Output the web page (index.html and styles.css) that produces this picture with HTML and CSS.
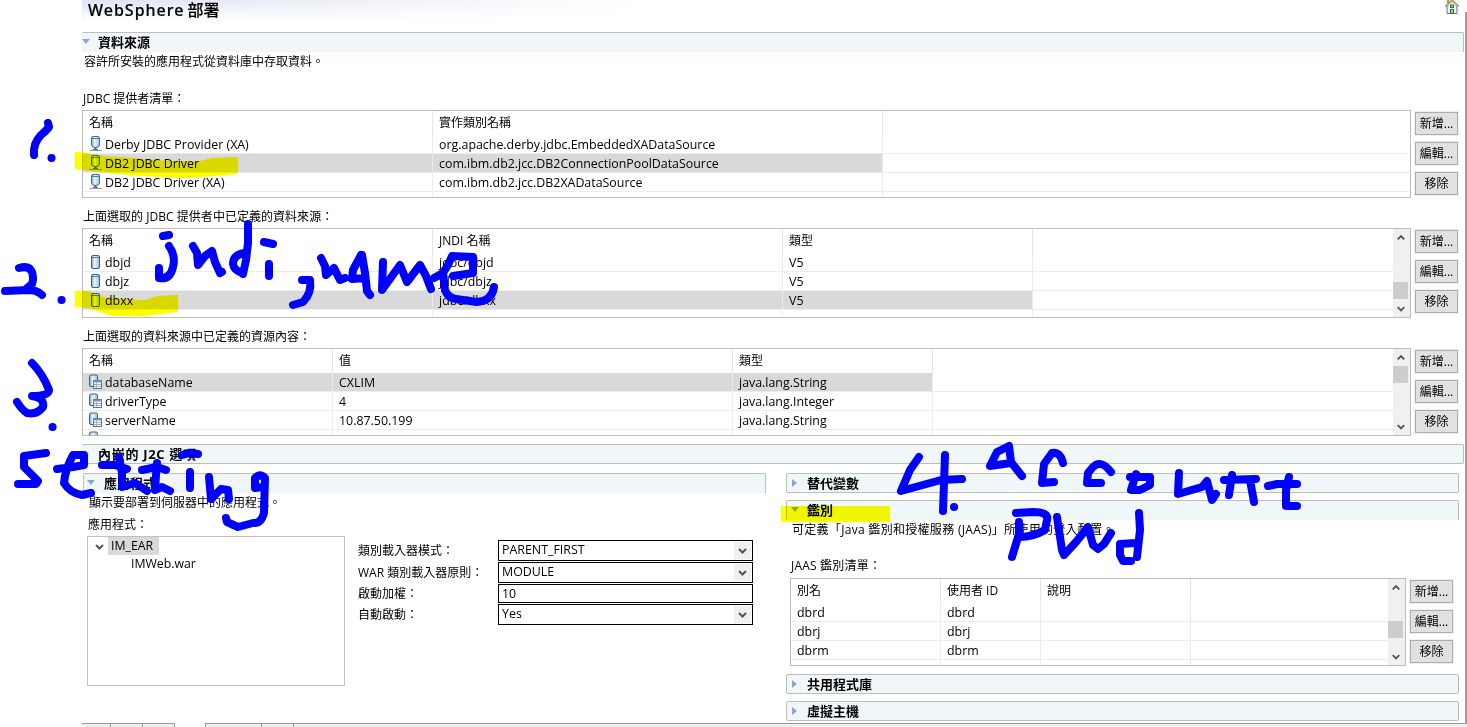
FILE: index.html
```
<!DOCTYPE html>
<html lang="zh-TW">
<head>
<meta charset="utf-8">
<title>WebSphere 部署</title>
<link rel="stylesheet" href="styles.css">
</head>
<body>
<svg class="defs" width="0" height="0" aria-hidden="true">
  <defs>
    <linearGradient id="cyl" x1="0" x2="1" y1="0" y2="0"><stop offset="0" stop-color="#7ba6c8"/><stop offset=".4" stop-color="#edf6fc"/><stop offset="1" stop-color="#9dbdd6"/></linearGradient>
    <symbol id="db" viewBox="0 0 16 16"><path d="M2.500 3Q2.500 1.500 4 1.500H9Q10.500 1.500 10.500 3V13Q10.500 14.500 9 14.500H4Q2.500 14.500 2.500 13Z" fill="url(#cyl)" stroke="#35608c"/><path d="M3 3.500H10" fill="none" stroke="#5c7f9d"/></symbol>
    <symbol id="provider" viewBox="0 0 16 16"><path d="M2.500 2Q2.500 .5 4 .5H9Q10.500 .5 10.500 2V9Q10.500 11.500 6.500 11.500T2.500 9Z" fill="url(#cyl)" stroke="#44719c"/><path d="M3 2.500H10" fill="none" stroke="#5c7f9d"/><path d="M6.500 11V14" stroke="#44607c" stroke-width="2"/><path d="M.5 14.500H13" stroke="#8b9aa8"/><path d="M4 13.500H9" stroke="#54718b"/></symbol>
    <symbol id="prop" viewBox="0 0 16 16"><path d="M.5 2.500Q.5 1 2 1H7Q8.500 1 8.500 2.500V12.500H2Q.5 12.500 .5 11Z" fill="url(#cyl)" stroke="#35608c"/><rect x="4.500" y="6.500" width="8" height="8" fill="#fff" stroke="#56779b"/><path d="M4 7.500H13" stroke="#7895b5" stroke-width="2"/><path d="M5 10.500H12M5 12.500H12M7.500 8V14" stroke="#a3b1c6"/></symbol>
    <symbol id="up" viewBox="0 0 17 17"><path d="M5 10.500L8.500 7L12 10.500" fill="none" stroke="#555" stroke-width="2"/></symbol>
    <symbol id="down" viewBox="0 0 17 17"><path d="M5 7L8.500 10.500L12 7" fill="none" stroke="#555" stroke-width="2"/></symbol>
  </defs>
</svg>
<div class="page">
  <main class="editor">
    <header class="title"><h1><span class="latin">WebSphere</span> 部署</h1>
      <svg class="home" width="14" height="16" viewBox="0 0 14 16"><path d="M2 7V14.500H12V7L7 2Z" fill="#e7f1fc" stroke="#5377aa"/><path d="M.5 7.500L7 1.500L13.500 7.500" fill="none" stroke="#a28a55" stroke-width="2.200"/><path d="M.8 7.500L7 1.800L13.200 7.500" fill="none" stroke="#f2dfac" stroke-width=".8"/><path d="M3 .5V4" stroke="#8c7042" stroke-width="1.500"/><rect x="5.500" y="6" width="3" height="2.500" fill="#9bc43c" stroke="#387858"/><rect x="5.500" y="10.500" width="3" height="4" fill="#d4c72c" stroke="#376a53"/></svg>
    </header>

    <div class="bar bar-top open"><i class="tw down"></i><b>資料來源</b></div>
    <p class="desc">容許所安裝的應用程式從資料庫中存取資料。</p>

    <p class="label l1">JDBC 提供者清單：</p>
    <div class="group">
      <div class="table t1 h88">
        <div class="row head"><span>名稱</span><span>實作類別名稱</span></div>
        <div class="row"><span><svg class="ic"><use href="#provider"/></svg>Derby JDBC Provider (XA)</span><span>org.apache.derby.jdbc.EmbeddedXADataSource</span></div>
        <div class="row sel"><span><svg class="ic"><use href="#provider"/></svg>DB2 JDBC Driver</span><span>com.ibm.db2.jcc.DB2ConnectionPoolDataSource</span></div>
        <div class="row"><span><svg class="ic"><use href="#provider"/></svg>DB2 JDBC Driver (XA)</span><span>com.ibm.db2.jcc.DB2XADataSource</span></div>
        <div class="row"><span></span><span></span></div>
      </div>
      <div class="buttons"><button>新增...</button><button>編輯...</button><button>移除</button></div>
    </div>

    <p class="label l2">上面選取的 JDBC 提供者中已定義的資料來源：</p>
    <div class="group">
      <div class="table t2 h90 scroll">
        <div class="rows">
          <div class="row head"><span>名稱</span><span>JNDI 名稱</span><span>類型</span></div>
          <div class="row"><span><svg class="ic"><use href="#db"/></svg>dbjd</span><span>jdbc/dbjd</span><span>V5</span></div>
          <div class="row"><span><svg class="ic"><use href="#db"/></svg>dbjz</span><span>jdbc/dbjz</span><span>V5</span></div>
          <div class="row sel"><span><svg class="ic"><use href="#db"/></svg>dbxx</span><span>jdbc/dbxx</span><span>V5</span></div>
          <div class="row"><span></span><span></span><span></span></div>
        </div>
        <div class="sb low"><svg><use href="#up"/></svg><i></i><svg><use href="#down"/></svg></div>
      </div>
      <div class="buttons"><button>新增...</button><button>編輯...</button><button>移除</button></div>
    </div>

    <p class="label l3">上面選取的資料來源中已定義的資源內容：</p>
    <div class="group">
      <div class="table t3 h88 scroll">
        <div class="rows">
          <div class="row head"><span>名稱</span><span>值</span><span>類型</span></div>
          <div class="row sel"><span><svg class="ic"><use href="#prop"/></svg>databaseName</span><span>CXLIM</span><span>java.lang.String</span></div>
          <div class="row"><span><svg class="ic"><use href="#prop"/></svg>driverType</span><span>4</span><span>java.lang.Integer</span></div>
          <div class="row"><span><svg class="ic"><use href="#prop"/></svg>serverName</span><span>10.87.50.199</span><span>java.lang.String</span></div>
          <div class="row"><span><svg class="ic"><use href="#prop"/></svg></span><span></span><span></span></div>
        </div>
        <div class="sb top"><svg><use href="#up"/></svg><i></i><svg><use href="#down"/></svg></div>
      </div>
      <div class="buttons"><button>新增...</button><button>編輯...</button><button>移除</button></div>
    </div>

    <div class="bar j2c"><i class="tw"></i><b>內嵌的 J2C 選項</b></div>

    <div class="columns">
      <section class="left">
        <div class="bar open"><i class="tw down"></i><b>應用程式</b></div>
        <p class="adesc">顯示要部署到伺服器中的應用程式。</p>
        <p class="alabel">應用程式：</p>
        <div class="app">
          <div class="tree">
            <div class="node"><svg width="17" height="17"><use href="#down"/></svg><span class="picked">IM_EAR</span></div>
            <div class="node child"><span>IMWeb.war</span></div>
          </div>
          <div class="form">
            <label>類別載入器模式：</label><div class="field"><span>PARENT_FIRST</span><svg><use href="#down"/></svg></div>
            <label>WAR 類別載入器原則：</label><div class="field"><span>MODULE</span><svg><use href="#down"/></svg></div>
            <label>啟動加權：</label><div class="field"><span>10</span></div>
            <label>自動啟動：</label><div class="field"><span>Yes</span><svg><use href="#down"/></svg></div>
          </div>
        </div>
      </section>
      <section class="right">
        <div class="bar"><i class="tw"></i><b>替代變數</b></div>
        <div class="bar open"><i class="tw down"></i><b>鑑別</b></div>
        <div class="auth">
          <p class="jdesc">可定義「Java 鑑別和授權服務 (JAAS)」所使用的登入配置。</p>
          <p class="jlabel">JAAS 鑑別清單：</p>
          <div class="group">
            <div class="table t4 h88 scroll">
              <div class="rows">
                <div class="row head"><span>別名</span><span>使用者 ID</span><span>說明</span></div>
                <div class="row"><span>dbrd</span><span>dbrd</span><span></span></div>
                <div class="row"><span>dbrj</span><span>dbrj</span><span></span></div>
                <div class="row"><span>dbrm</span><span>dbrm</span><span></span></div>
                <div class="row"><span></span><span></span><span></span></div>
              </div>
              <div class="sb mid"><svg><use href="#up"/></svg><i></i><svg><use href="#down"/></svg></div>
            </div>
            <div class="buttons"><button>新增...</button><button>編輯...</button><button>移除</button></div>
          </div>
        </div>
        <div class="bar"><i class="tw"></i><b>共用程式庫</b></div>
        <div class="bar"><i class="tw"></i><b>虛擬主機</b></div>
      </section>
    </div>
  </main>
  <div class="edge"></div>
  <footer class="tabs"><i class="w28"></i><i class="w32"></i><i class="w32"></i><i class="gap"></i><i class="w56"></i><i class="w32"></i><i class="rest"></i></footer>

  <svg class="marker" width="1467" height="727" viewBox="0 0 1467 727">
    <path d="M75 152L87 153L103 156L133 158L167 161H200L212 158L238 157V173L230 175L187 178L157 177L127 175L100 172L75 169Z"/>
    <path d="M75 291H88L103 297L120 299L145 300L158 296L178 295V312L143 316H112L97 311L88 308L75 307Z"/>
    <path d="M781 506H890V522H781Z"/>
  </svg>
  <svg class="ink" width="1467" height="727" viewBox="0 0 1467 727">
    <path d="M48 123L49 127Q46 131 41 135Q33 143 34 155M51.500 158h.1"/>
    <path d="M19 268Q29 265 32 272Q34 279 32 284L27 288M5 291L29 290Q37 290 42 295M61.500 300h.1"/>
    <path d="M163 236L169 235M169 246Q176 256 173 267Q170 280 159 278V268"/>
    <path d="M193 246L197 253L198 265L205 256L212 251L215 262L220 273L222 272"/>
    <path d="M248 224V243L246 260L243 274M244 253Q233 255 233 264Q234 271 243 273M264 242L273 244M269 264V276"/>
    <path d="M302 280H310Q312 293 303 302L293 305"/>
    <path d="M321 258L325 266L326 275L334 268L340 280L345 278"/>
    <path d="M361 255L353 270L352 279L365 278M362 255L365 273L367 291L370 295"/>
    <path d="M383 262L382 290L400 265L407 282L420 265L426 276L431 289"/>
    <path d="M434 278L443 273L448 265L452 256L473 257V273L453 276M443 273L445 290Q448 298 456 299L477 302Q492 301 494 287"/>
    <path d="M32 363Q43 374 49 390Q49 396 32 396Q45 398 43 407Q37 415 27 413Q22 410 17 402M52.500 427h.1"/>
    <path d="M46 453L24 456V467L38 481L36 484H18"/>
    <path d="M57 469L73 467L84 465V455H73Q65 470 64 483Q70 493 82 495L91 493"/>
    <path d="M102 465H115L127 469M119 457L122 473V487L135 483L147 491"/>
    <path d="M142 470L157 467L166 470M157 463L156 475L155 490L162 487L170 491"/>
    <path d="M182 455L189 453L198 454M190 472V488M209 477L211 499L221 489L228 490L229 499"/>
    <path d="M263 487L255 488V478Q260 473 265 478L264 513Q261 524 253 523L238 527L227 522L226 518"/>
    <path d="M919 457L910 470L901 491L941 480L962 479M945 455L943 511M954 507h.1"/>
    <path d="M1009 446L997 452L990 466L1011 463M1009 446L1011 462L1022 476"/>
    <path d="M1063 463Q1060 451 1052 453L1044 464L1042 483L1054 482M1111 472Q1101 459 1093 467L1088 473L1087 483H1101"/>
    <path d="M1136 474L1131 490H1140L1150 485V477H1130"/>
    <path d="M1179 473L1178 494L1202 487L1207 481L1212 500L1216 494"/>
    <path d="M1224 480L1256 479M1232 475L1229 495M1250 480L1254 502M1268 486L1277 484H1297M1289 477L1286 490V506H1297"/>
    <path d="M1016 513L1033 512Q1049 512 1047 520L1045 530Q1033 537 1020 537M1019 522V534L1012 557"/>
    <path d="M1057 517L1062 550L1064 555L1076 542L1088 527L1093 545L1098 549L1104 544L1111 533"/>
    <path d="M1139 513L1140 530L1137 557M1136 543L1120 544V555L1123 561H1131"/>
  </svg>
</div>
</body>
</html>
```
FILE: styles.css
```
* { box-sizing: border-box; }
body { margin: 0; background: #fff; color: #000; font: 12px/16px "Open Sans", "Noto Sans CJK TC", sans-serif; }
p, h1 { margin: 0; font-weight: 400; }
.defs { position: absolute; }
.page { position: relative; width: 1467px; height: 727px; overflow: hidden; display: grid; grid-template: 723px 4px / 1465px 2px; }
.editor { padding-left: 82px; }

.title { height: 32px; padding: 0 6px 0 6px; display: flex; justify-content: space-between; background: linear-gradient(to right, transparent, #fff 560px), linear-gradient(#dfe3f3, #fff 21px); }
.title h1 { font: 500 16px/20px "Noto Sans", "Noto Sans CJK TC", sans-serif; white-space: pre; -webkit-text-stroke: .2px #000; }
.latin { letter-spacing: 1px; margin-right: -1px; }
.home { margin-top: -1px; }

.bar { height: 20px; display: flex; align-items: center; border: 1px solid #bdbdbd; border-radius: 2px; background: #eff7f9; font-size: 13px; white-space: pre; }
.bar.open { border-bottom: 0; border-radius: 2px 2px 0 0; }
.bar b { font-weight: 700; line-height: 18px; }
.bar.open b { margin-top: -1px; height: 18px; }
.tw { width: 20px; padding-left: 5px; flex: none; }
.right .tw::before, .tw.down::before { content: ""; display: block; width: 5px; height: 8px; background: #91a4cc; clip-path: polygon(0 0, 100% 50%, 0 100%); }
.tw.down { padding-left: 4px; }
.tw.down::before, .right .tw.down::before { width: 8px; height: 5px; margin-top: -2px; clip-path: polygon(0 0, 100% 0, 50% 100%); }
.bar-top, .j2c { width: 1382px; border-left: 0; }
.bar-top .tw, .j2c .tw { width: 16px; padding-left: 0; }
.j2c { letter-spacing: .7px; }
.desc { padding-left: 2px; margin-top: 2px; }
.label { padding-left: 1px; height: 16px; }
.l1 { margin: 21px 0 3px; }
.l2 { margin: 11px 0 3px; letter-spacing: .03px; }
.l3 { margin: 11px 0 3px; }

.group { display: flex; gap: 3px; }
.table { width: 1329px; border: 1px solid #c3beae; overflow: hidden; }
.h88 { height: 88px; }
.h90 { height: 90px; }
.scroll { display: flex; }
.rows { flex: 1; }
.row { height: 19px; display: grid; border-bottom: 1px solid #ededed; font-size: 12.4px; line-height: 18px; background: linear-gradient(#d9d9d9, #d9d9d9) no-repeat 0 0 / 0 100%; }
.t1 .row { grid-template-columns: 350px 450px; }
.t2 .row { grid-template-columns: 350px 350px 250px; }
.t3 .row { grid-template-columns: 250px 400px 200px; }
.t4 .row { grid-template-columns: 150px 100px 150px; }
.t1 .sel { background-size: 800px 100%; }
.t2 .sel { background-size: 950px 100%; }
.t3 .sel { background-size: 850px 100%; }
.row span { display: flex; align-items: center; padding: 2px 0 0 6px; height: 18px; border-right: 1px solid #e6edf8; white-space: pre; overflow: hidden; }
.row.head { height: 24px; border-bottom: 0; font-size: 12px; line-height: 22px; }
.row.head span { height: 24px; padding-top: 0; padding-bottom: 1px; border-color: #e5e5e5; }
.ic { width: 16px; height: 16px; flex: none; margin-top: -3px; }

.sb { width: 17px; flex: none; display: flex; flex-direction: column; background: #f0f0f0; }
.sb svg { width: 16px; height: 17px; flex: none; }
.sb i { width: 15px; height: 17px; background: #cdcdcd; }
.sb svg:last-child { margin-top: auto; }
.low i { margin-top: 36px; }
.mid i { margin-top: 25px; }

.buttons { display: flex; flex-direction: column; gap: 5px; padding-top: 1px; }
.buttons button { width: 43px; height: 23px; margin: 1px; padding: 0; border: 1px solid #adadad; outline: 1px solid #f0f0f0; background: #e1e1e1; color: #000; font: inherit; border-radius: 0; }

.j2c { margin-top: 8px; }
.columns { display: grid; grid-template-columns: 683px 673px; gap: 20px; margin: 9px 0 0 1px; }
.left > .bar .tw { padding-left: 3px; }
.adesc { padding-left: 6px; margin-top: 2px; }
.alabel { padding: 6px 0 3px 5px; }
.app { display: flex; gap: 13px; padding-left: 4px; }
.tree { width: 258px; height: 150px; border: 1px solid #c3c2b0; font-size: 12.3px; }
.node { display: flex; align-items: center; height: 18px; padding-left: 3px; }
.picked { background: #d9d9d9; padding: 0 3px; height: 18px; line-height: 17px; width: 51px; }
.child { padding-left: 43px; }
.form { display: grid; grid-template-columns: 140px 255px; grid-template-rows: 21px 21px 19px 21px; row-gap: 1px; padding-top: 4px; align-items: center; }
.field { height: 100%; border: 1px solid #000; display: flex; justify-content: space-between; padding: 1px; font-size: 12.4px; line-height: 16px; }
.field span { padding-left: 2px; }
.field svg { width: 17px; height: 17px; background: #f0f0f0; }
.right { display: flex; flex-direction: column; gap: 7px; }
.auth { height: 140px; padding-left: 4px; }
.jdesc { margin: -5px 0 20px 2px; letter-spacing: .3px; }
.jlabel { padding: 0 0 0 1px; height: 20px; letter-spacing: .2px; }
.t4 { width: 616px; }

.edge { margin-top: 12px; background: #a0a0a0; }
.tabs { grid-column: 1 / 3; display: flex; padding-left: 82px; }
.tabs i { border-top: 1px solid #999; border-right: 1px solid #999; background: #f0f0f0; }
.w28 { width: 29px; }
.w32 { width: 32px; }
.w56 { width: 56px; }
.tabs .gap { width: 31px; border-top: 0; background: #fff; }
.tabs .rest { flex: 1; border-right: 0; }

/* Free-hand annotations lie over the whole editor */
.marker, .ink { position: absolute; left: 0; top: 0; pointer-events: none; }
.marker { fill: #ff0; mix-blend-mode: multiply; }
.ink { fill: none; stroke: #00f; stroke-width: 8; stroke-linecap: round; stroke-linejoin: round; }
```
